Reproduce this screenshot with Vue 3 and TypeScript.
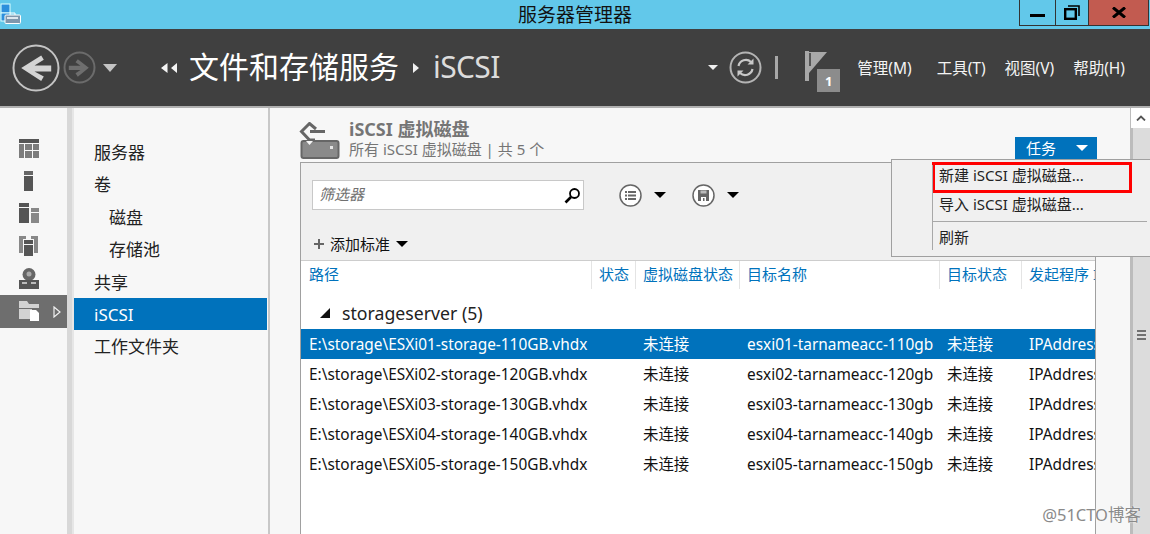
<script setup lang="ts">
const navItems = [
  { label: '服务器', sub: false, active: false },
  { label: '卷', sub: false, active: false },
  { label: '磁盘', sub: true, active: false },
  { label: '存储池', sub: true, active: false },
  { label: '共享', sub: false, active: false },
  { label: 'iSCSI', sub: false, active: true },
  { label: '工作文件夹', sub: false, active: false },
]
const menus = ['管理(M)', '工具(T)', '视图(V)', '帮助(H)']
const columns = ['路径', '状态', '虚拟磁盘状态', '目标名称', '目标状态', '发起程序 ID']
const rows = [1, 2, 3, 4, 5].map((n) => ({
  path: `E:\\storage\\ESXi0${n}-storage-1${n}0GB.vhdx`,
  state: '未连接',
  target: `esxi0${n}-tarnameacc-1${n}0gb`,
  tstate: '未连接',
  init: 'IPAddress:192.168.1.1',
}))
</script>

<template>
  <div class="app">
    <div class="titlebar">
      <svg class="app-icon" width="22" height="25" viewBox="0 0 22 25">
        <rect x="1" y="4" width="9" height="9" fill="#2c8fdc" stroke="#dff" stroke-width="1" />
        <rect x="1" y="13" width="9" height="8" fill="#2c8fdc" stroke="#dff" stroke-width="1" />
        <rect x="5" y="15" width="15.5" height="8.5" rx="1" fill="#7f97ad" stroke="#fff" />
        <path d="M7 18h11" stroke="#dfe7ee" stroke-width="2" />
        <path d="M10 13h5v2" fill="none" stroke="#fff" />
      </svg>
      <div class="title">服务器管理器</div>
      <div class="winbtns">
        <div class="wb wb-min"><svg width="16" height="16" viewBox="0 0 16 16"><rect x="0" y="9" width="15" height="3" fill="#000" /></svg></div>
        <div class="wb wb-max"><svg width="16" height="16" viewBox="0 0 16 16"><path d="M4 1h11v10" fill="none" stroke="#000" stroke-width="1.6" /><rect x="1.2" y="4.200" width="10.600" height="9.600" fill="none" stroke="#000" stroke-width="2.400" /></svg></div>
        <div class="wb wb-close"><svg width="14" height="11" viewBox="0 0 14 11"><path d="M1 0.5 13 10.500M13 0.5 1 10.500" stroke="#000" stroke-width="3" /></svg></div>
      </div>
    </div>

    <div class="header">
      <svg class="nav-back" width="48" height="48" viewBox="0 0 48 48">
        <circle cx="24" cy="24" r="22.500" fill="none" stroke="#c4c4c4" stroke-width="2" />
        <path d="M9.200 24 29.200 11.500 31.800 15.800 22.500 21.500H39.200V27.500H22.500L31.800 32.500 29.200 37z" fill="#d4d4d4" />
      </svg>
      <svg class="nav-fwd" width="33" height="33" viewBox="0 0 33 33">
        <circle cx="16.500" cy="16.500" r="15" fill="none" stroke="#6b6b6b" stroke-width="2" />
        <path d="M25.800 16.700 14.800 8.300 12.500 11.300 17.500 14.700H5.800V19H17.500L12.500 22.300 14.800 25.700z" fill="#6e6e6e" />
      </svg>
      <span class="tri tri-hist"></span>
      <svg class="crumb-back" width="16" height="10" viewBox="0 0 16 10"><path d="M6.500 0v10L0 5zM16 0v10L10 5z" fill="#f4f4f4" /></svg>
      <span class="crumb">文件和存储服务</span>
      <svg class="crumb-sep" width="6" height="12" viewBox="0 0 6 12"><path d="M0 1l6 5-6 5z" fill="#f0f0f0" /></svg>
      <span class="crumb crumb-last">iSCSI</span>

      <span class="spacer"></span>

      <span class="tri-small"></span>
      <svg class="refresh" width="33" height="33" viewBox="0 0 33 33">
        <circle cx="16.500" cy="16.500" r="15" fill="none" stroke="#b4b4b4" stroke-width="2" />
        <path d="M9.500 15a7.500 7.500 0 0 1 12.500-4M23.500 18a7.500 7.500 0 0 1-12.500 4" fill="none" stroke="#c8c8c8" stroke-width="2.200" />
        <path d="M24.500 7.500v6h-6zM8.500 25.500v-6h6z" fill="#c8c8c8" />
      </svg>
      <span class="vsep"></span>
      <div class="flag">
        <svg width="24" height="31" viewBox="0 0 24 31">
          <rect x="0" y="0" width="4" height="30" fill="#a8a8a8" />
          <path d="M4 1h18L4 22z" fill="#a8a8a8" />
          <rect x="4" y="2" width="2" height="13" fill="#555" />
        </svg>
        <span class="badge">1</span>
      </div>
      <span v-for="(m, i) in menus" :key="m" class="hmenu" :class="'hmenu-' + i">{{ m }}</span>
    </div>

    <div class="body">
      <div class="rail">
        <div class="rail-item">
          <svg width="20" height="19" viewBox="0 0 20 19"><rect width="20" height="4" fill="#555" /><path d="M0 5h5v14H0zM6 5h7v6H6zM14 5h6v6h-6zM6 12h7v7H6zM14 12h6v7h-6z" fill="#7c7c7c" /></svg>
        </div>
        <div class="rail-item">
          <svg width="20" height="20" viewBox="0 0 20 20"><rect x="5" width="9" height="4" fill="#666" /><rect x="5" y="5" width="9" height="15" fill="#555" /></svg>
        </div>
        <div class="rail-item">
          <svg width="20" height="20" viewBox="0 0 20 20"><rect width="10" height="4" fill="#555" /><rect y="5" width="10" height="15" fill="#555" /><rect x="12" y="5" width="8" height="4" fill="#888" /><rect x="12" y="10" width="8" height="10" fill="#888" /></svg>
        </div>
        <div class="rail-item">
          <svg width="20" height="20" viewBox="0 0 20 20"><path d="M0 0h7v3H4v14H0zM12 0h7v17h-4V3h-3z" fill="#888" /><rect x="5" y="4" width="9" height="4" fill="#555" /><rect x="5" y="9" width="9" height="11" fill="#555" /></svg>
        </div>
        <div class="rail-item">
          <svg width="20" height="21" viewBox="0 0 20 21"><circle cx="10" cy="6.500" r="6.500" fill="#666" /><circle cx="10" cy="6" r="2.500" fill="#aaa" /><rect y="12" width="20" height="9" fill="#555" /><path d="M3 15h5M12 15h5" stroke="#bbb" stroke-width="2" /></svg>
        </div>
        <div class="rail-item rail-active">
          <svg width="20" height="20" viewBox="0 0 20 20"><path d="M0 0h8l2 3h10v4H0zM0 8h13v10H0z" fill="#d2d2d2" /><path d="M11 9h6l3 3v8h-9z" fill="#fff" /></svg>
          <svg class="rail-arrow" width="8" height="12" viewBox="0 0 8 12"><path d="M1 1l6 5-6 5z" fill="none" stroke="#f0f0f0" stroke-width="1.200" /></svg>
        </div>
      </div>
      <div class="splitter"></div>
      <div class="nav">
        <div v-for="n in navItems" :key="n.label" class="nav-item" :class="{ sub: n.sub, active: n.active }">{{ n.label }}</div>
      </div>

      <div class="main">
        <div class="head">
          <svg class="head-icon" width="42" height="38" viewBox="0 0 42 38">
            <path d="M17 7 10.500 1.500 2.500 9.500 10.500 18 16 18" fill="none" stroke="#666" stroke-width="3" />
            <path d="M11 9.500h15" stroke="#666" stroke-width="3" />
            <rect x="2.500" y="19" width="37" height="17" rx="2" fill="#8a8a8a" stroke="#666" stroke-width="2" />
            <path d="M7 19h7l-3.500 4z" fill="#f7f7f7" />
            <rect x="31" y="24" width="3" height="3" fill="#e4e4e4" />
          </svg>
          <div class="head-text">
            <div class="head-title">iSCSI 虚拟磁盘</div>
            <div class="head-sub">所有 iSCSI 虚拟磁盘 | 共 5 个</div>
          </div>
          <div class="task-btn"><span>任务</span><span class="tri-white"></span></div>
        </div>

        <div class="panel">
          <div class="tools">
            <div class="tools-row">
              <div class="filter">
                <span class="filter-ph">筛选器</span>
                <svg width="17" height="17" viewBox="0 0 17 17"><circle cx="10.500" cy="6.500" r="4.500" fill="none" stroke="#000" stroke-width="1.800" /><path d="M7 10 1.500 15.500" stroke="#000" stroke-width="2.600" /></svg>
              </div>
              <div class="circle-btn">
                <svg width="23" height="23" viewBox="0 0 23 23"><circle cx="11.500" cy="11.500" r="10.500" fill="#fff" stroke="#666" stroke-width="1.500" /><path d="M6 7h2v2H6zM6 10.500h2v2H6zM6 14h2v2H6zM9 7h8v2H9zM9 10.500h8v2H9zM9 14h8v2H9z" fill="#666" /></svg>
                <span class="tri-black"></span>
              </div>
              <div class="circle-btn circle-btn-2">
                <svg width="23" height="23" viewBox="0 0 23 23"><circle cx="11.500" cy="11.500" r="10.500" fill="#fff" stroke="#666" stroke-width="1.500" /><path d="M6 6h11v11H6z" fill="#666" /><rect x="8.500" y="6.500" width="6" height="3" fill="#bbb" /><rect x="9" y="13" width="5" height="4" fill="#fff" /><rect x="11" y="14" width="1.500" height="3" fill="#666" /></svg>
                <span class="tri-black"></span>
              </div>
            </div>
            <div class="add-row">
              <svg width="10" height="10" viewBox="0 0 10 10"><path d="M4 0h2v4h4v2H6v4H4V6H0V4h4z" fill="#666" /></svg>
              <span>添加标准</span>
              <span class="tri-black tri-add"></span>
            </div>
          </div>
          <div class="table">
            <div class="thead">
              <div v-for="c in columns" :key="c" class="th">{{ c }}</div>
            </div>
            <div class="group">
              <svg class="group-tri" width="10" height="10" viewBox="0 0 10 10"><path d="M10 0v10H0z" fill="#111" /></svg>storageserver (5)
            </div>
            <div v-for="(r, i) in rows" :key="r.path" class="tr" :class="{ selected: i === 0 }">
              <div class="td">{{ r.path }}</div>
              <div class="td"></div>
              <div class="td">{{ r.state }}</div>
              <div class="td">{{ r.target }}</div>
              <div class="td">{{ r.tstate }}</div>
              <div class="td">{{ r.init }}</div>
            </div>
          </div>
        </div>

        <div class="task-menu">
          <div class="menu-item menu-new">新建 iSCSI 虚拟磁盘...</div>
          <div class="menu-item menu-import">导入 iSCSI 虚拟磁盘...</div>
          <div class="menu-sep"></div>
          <div class="menu-item menu-refresh">刷新</div>
        </div>
      </div>

      <div class="scrollbar">
        <div class="sb-up"><svg width="10" height="6" viewBox="0 0 10 6"><path d="M1 5.500 5 1.500l4 4" fill="none" stroke="#555" stroke-width="1.800" /></svg></div>
        <div class="sb-grip"><i></i><i></i><i></i></div>
      </div>
    </div>
    <div class="watermark">@51CTO博客</div>
  </div>
</template>

<style>
html, body { margin: 0; padding: 0; background: #f7f7f7; }
</style>

<style scoped>
.app {
  position: relative;
  width: 1150px;
  height: 534px;
  overflow: hidden;
  display: flex;
  flex-direction: column;
  font-family: "Noto Sans", "Noto Sans CJK SC", sans-serif;
  font-size: 14px;
  color: #1a1a1a;
  background: #f7f7f7;
}
.titlebar {
  height: 29px;
  flex: none;
  background: #62c8ea;
  position: relative;
  display: flex;
  justify-content: center;
}
.app-icon { position: absolute; left: 0; top: 0; }
.title { font-size: 19px; line-height: 31px; color: #111; }
.winbtns {
  position: absolute;
  right: 1px;
  top: 0;
  height: 25px;
  display: flex;
  border: 1px solid #333;
  border-top: none;
}
.wb { display: flex; align-items: center; justify-content: center; height: 25px; }
.wb-min { width: 35px; border-right: 1px solid #333; }
.wb-max { width: 32px; }
.wb-close { width: 59px; background: #c25b50; border-left: 1px solid #333; }

.header {
  flex: none;
  background: #404040;
  border-bottom: 2px solid #b0b0b0;
  box-sizing: border-box;
  height: 79px;
  display: flex;
  align-items: center;
  color: #fff;
  padding-left: 12px;
}
.nav-fwd { margin-left: 3px; }
.tri-hist {
  margin-left: 7px;
  border-left: 7px solid transparent;
  border-right: 7px solid transparent;
  border-top: 8px solid #c4c4c4;
}
.crumb-back { margin-left: 44px; }
.crumb { font-size: 30px; line-height: 40px; margin-left: 12px; margin-top: -2px; color: #fff; white-space: nowrap; }
.crumb-sep { margin-left: 14px; }
.crumb-last { margin-left: 14px; color: #dcdcdc; letter-spacing: -0.6px; }
.spacer { flex: 1; }
.tri-small {
  border-left: 5px solid transparent;
  border-right: 5px solid transparent;
  border-top: 5px solid #f0f0f0;
  margin-right: 11px;
}
.vsep { width: 3px; height: 23px; background: #a8a8a8; margin-left: 13px; margin-right: 27px; }
.flag { position: relative; width: 36px; height: 36px; margin-right: 16px; margin-top: 3px; }
.badge {
  position: absolute;
  left: 12px;
  top: 18px;
  width: 23px;
  height: 23px;
  background: #8c8c8c;
  color: #fff;
  font-size: 13px;
  font-weight: 700;
  text-align: center;
  line-height: 24px;
}
.hmenu { font-size: 15.500px; white-space: nowrap; color: #f4f4f4; margin-top: -1px; }
.hmenu-0 { margin-right: 25px; }
.hmenu-1 { margin-right: 19px; }
.hmenu-2 { margin-right: 19px; }
.hmenu-3 { margin-right: 25px; }

.body { flex: 1; display: flex; min-height: 0; }
.rail { width: 67px; flex: none; padding-top: 24px; box-sizing: border-box; background: #f7f7f7; }
.rail-item { height: 32.500px; display: flex; align-items: center; padding-left: 19px; position: relative; }
.rail-active { background: #6e6e6e; height: 33px; }
.rail-arrow { position: absolute; left: 53px; top: 11px; }
.splitter { width: 5px; flex: none; background: #d8d8d8; border-right: 2px solid #e6e6e6; }
.nav {
  width: 194px;
  flex: none;
  padding-top: 28px;
  border-right: 2px solid #c8c8c8;
  background: #f7f7f7;
}
.nav-item { height: 32.400px; line-height: 34px; font-size: 17px; padding-left: 20px; width: 193px; color: #222; white-space: nowrap; box-sizing: border-box; }
.nav-item.sub { padding-left: 35px; }
.nav-item.active { background: #0072bc; color: #fff; }
.main {
  flex: 1;
  position: relative;
  padding-left: 30px;
  min-width: 0;
}
.head { display: flex; height: 54px; align-items: flex-start; padding-top: 11px; box-sizing: border-box; position: relative; }
.head-icon { margin-top: 3px; margin-left: -1px; }
.head-text { margin-left: 8px; }
.head-title { font-size: 18px; font-weight: 700; line-height: 21px; color: #757575; white-space: nowrap; }
.head-sub { font-size: 15px; line-height: 18px; color: #757575; white-space: nowrap; }
.task-btn {
  position: absolute;
  left: 715px;
  top: 29px;
  width: 82px;
  height: 22px;
  background: #0072bc;
  color: #fff;
  font-size: 15px;
  line-height: 21px;
  display: flex;
  align-items: center;
  padding-left: 11px;
  box-sizing: border-box;
}
.tri-white {
  margin-left: 20px;
  border-left: 6px solid transparent;
  border-right: 6px solid transparent;
  border-top: 6px solid #fff;
}
.panel {
  margin-right: 34px;
  border: 1px solid #a0a0a0;
  border-bottom: none;
  height: 400px;
  background: #fff;
}
.tools {
  height: 98px;
  background: #f0f0f0;
  border-bottom: 1px solid #cdcdcd;
  position: relative;
  box-sizing: border-box;
}
.tools-row { display: flex; align-items: center; padding: 17px 0 0 11px; }
.filter {
  width: 272px;
  height: 30px;
  box-sizing: border-box;
  background: #fff;
  border: 1px solid #c8c8c8;
  display: flex;
  align-items: center;
  justify-content: space-between;
  padding: 0 2px 0 6px;
}
.filter-ph { font-style: italic; color: #707070; font-size: 15px; line-height: 24px; margin-top: -2px; }
.circle-btn { display: flex; align-items: center; gap: 12px; margin-left: 35px; }
.circle-btn-2 { margin-left: 26px; }
.tri-black {
  border-left: 6.500px solid transparent;
  border-right: 6.500px solid transparent;
  border-top: 6.500px solid #000;
}
.add-row {
  position: absolute;
  left: 13px;
  top: 70px;
  display: flex;
  align-items: center;
  gap: 6px;
  font-size: 15px;
  line-height: 22px;
  color: #111;
}
.table { overflow: hidden; }
.thead, .tr {
  display: grid;
  grid-template-columns: 291px 44px 104px 200px 82px 90px;
  width: 811px;
}
.thead { height: 28px; }
.th {
  color: #0072bc;
  font-size: 15px;
  line-height: 26px;
  padding-left: 7px;
  border-right: 1px solid #e4e4e4;
  white-space: nowrap;
  overflow: hidden;
  box-sizing: border-box;
}
.th:first-child { padding-left: 8px; }
.group {
  height: 40px;
  line-height: 48px;
  font-size: 17.700px;
  padding-left: 41px;
  color: #222;
  position: relative;
  white-space: nowrap;
}
.group-tri { position: absolute; left: 19px; top: 19px; }
.tr { height: 30px; line-height: 32px; font-size: 15.400px; color: #111; }
.tr.selected { background: #0072bc; color: #fff; width: 794px; }
.td { height: 30px; padding-left: 7px; white-space: nowrap; overflow: hidden; box-sizing: border-box; }
.td:first-child { padding-left: 8px; }
.task-menu {
  position: absolute;
  left: 621px;
  top: 51px;
  width: 259px;
  height: 98px;
  box-sizing: border-box;
  background: #f0f0f0;
  border: 1px solid #a0a0a0;
  border-right: none;
  padding: 2px 0 0 41px;
  z-index: 2;
}
.task-menu::before {
  content: "";
  position: absolute;
  left: 40px;
  top: 5px;
  bottom: 6px;
  width: 1px;
  background: #a8a8a8;
}
.menu-item { height: 28px; font-size: 15px; color: #222; padding-left: 6px; white-space: nowrap; box-sizing: border-box; margin-right: 17px; }
.menu-new { border: 3px solid #f00; height: 31px; padding-left: 4px; line-height: 20px; width: 200px; margin-left: -1px; }
.menu-import { height: 27px; line-height: 22px; }
.menu-sep { height: 1px; background: #a8a8a8; margin: 1px 3px 2px 0; }
.menu-refresh { line-height: 26px; }
.scrollbar {
  width: 20px;
  flex: none;
  background: #dcdcdc;
  border-left: 3px solid #bcbcbc;
  box-sizing: border-box;
  position: relative;
}
.sb-up { height: 20px; margin-left: -2px; background: #fff; display: flex; align-items: center; justify-content: center; }
.sb-grip { position: absolute; left: 4px; top: 222px; width: 9px; display: flex; flex-direction: column; gap: 2px; }
.sb-grip i { display: block; height: 2px; background: #707070; }
.watermark {
  position: absolute;
  right: 9px;
  top: 502px;
  font-size: 16.500px;
  color: #8a8a8a;
  text-shadow: 0 0 2px #fff;
}
</style>
